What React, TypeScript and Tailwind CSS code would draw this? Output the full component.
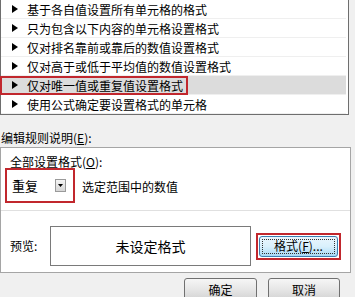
import type { ReactNode } from "react";

const rules = [
  "基于各自值设置所有单元格的格式",
  "只为包含以下内容的单元格设置格式",
  "仅对排名靠前或靠后的数值设置格式",
  "仅对高于或低于平均值的数值设置格式",
  "仅对唯一值或重复值设置格式",
  "使用公式确定要设置格式的单元格",
];

function Arrow() {
  return (
    <svg width="6" height="8" viewBox="0 0 6 8" className="shrink-0">
      <polygon points="0,0 6,4 0,8" fill="#000" />
    </svg>
  );
}

function Button({ children, className = "" }: { children: ReactNode; className?: string }) {
  return (
    <div
      className={`flex items-center justify-center rounded-[3px] border border-[#707070] bg-gradient-to-b from-[#f6f6f6] via-[#e6e6e6] to-[#d2d2d2] ${className}`}
    >
      {children}
    </div>
  );
}

export default function App() {
  return (
    <div className="h-[297px] w-[355px] overflow-hidden bg-[#f0f0f0] text-[12px] text-black font-['Noto_Sans_CJK_SC',sans-serif]">
      {/* rule type list */}
      <div className="w-[349px] border-x border-b border-[#6e6e6e] bg-white pr-[2px]">
        {rules.map((r, i) => (
          <div
            key={r}
            className={`relative flex h-[19px] items-center gap-[9px] border-b border-[#efefef] pl-[11px] leading-[19px] ${
              i === 4 ? "bg-[#dcdcdc]" : ""
            }`}
          >
            <Arrow />
            <span className="whitespace-nowrap">{r}</span>
            {i === 4 && (
              <div className="absolute left-[-1px] top-0 h-[19px] w-[188px] border-2 border-[#c1272d]" />
            )}
          </div>
        ))}
      </div>

      <div className="mt-[16px] pl-[1px] leading-[14px]">
        编辑规则说明(<span className="underline">E</span>):
      </div>

      {/* rule description panel */}
      <div className="mt-[2px] h-[126px] w-[351px] border border-[#a5a5a5] bg-white">
        <div className="mt-[7px] pl-[9px] leading-[13px]">
          全部设置格式(<span className="underline">O</span>):
        </div>
        <div className="flex items-center">
          <div className="ml-[4px] flex h-[35px] w-[70px] items-center justify-between border-2 border-[#c1272d] pl-[5px] pr-[7px]">
            <span className="text-[13px] leading-[14px]">重复</span>
            <div className="flex h-[13px] w-[11px] items-center justify-center border border-[#9a9a9a] bg-gradient-to-b from-[#f4f4f4] to-[#d6d6d6]">
              <svg width="5" height="3" viewBox="0 0 5 3">
                <polygon points="0,0 5,0 2.5,3" fill="#000" />
              </svg>
            </div>
          </div>
          <span className="ml-[7px] mt-[2px] leading-[14px]">选定范围中的数值</span>
        </div>
        <div className="mt-[7px] h-px w-full bg-[#e0e0e0]" />
        <div className="mt-[15px] flex items-center">
          <span className="w-[49px] pl-[9px] leading-[14px]">预览:</span>
          <div className="flex h-[40px] w-[201px] items-center justify-center border border-[#7a7a7a] text-[14px]">
            未设定格式
          </div>
          <div className="ml-[5px] flex h-[27px] w-[85px] items-center justify-center border-2 border-[#c1272d]">
            <div className="flex h-[21px] w-[79px] items-center justify-center rounded-[3px] border border-[#3c7fb1] bg-gradient-to-b from-[#eaf6fd] via-[#d9f0fc] to-[#a7d9f5] p-[2px]">
              <div className="flex h-full w-full items-center justify-center border border-dotted border-[#333]">
                格式(<span className="underline">F</span>)...
              </div>
            </div>
          </div>
        </div>
      </div>

      {/* dialog buttons */}
      <div className="mt-[5px] flex justify-end gap-[11px] pr-[15px]">
        <Button className="h-[23px] w-[73px]">确定</Button>
        <Button className="h-[23px] w-[72px]">取消</Button>
      </div>
    </div>
  );
}
